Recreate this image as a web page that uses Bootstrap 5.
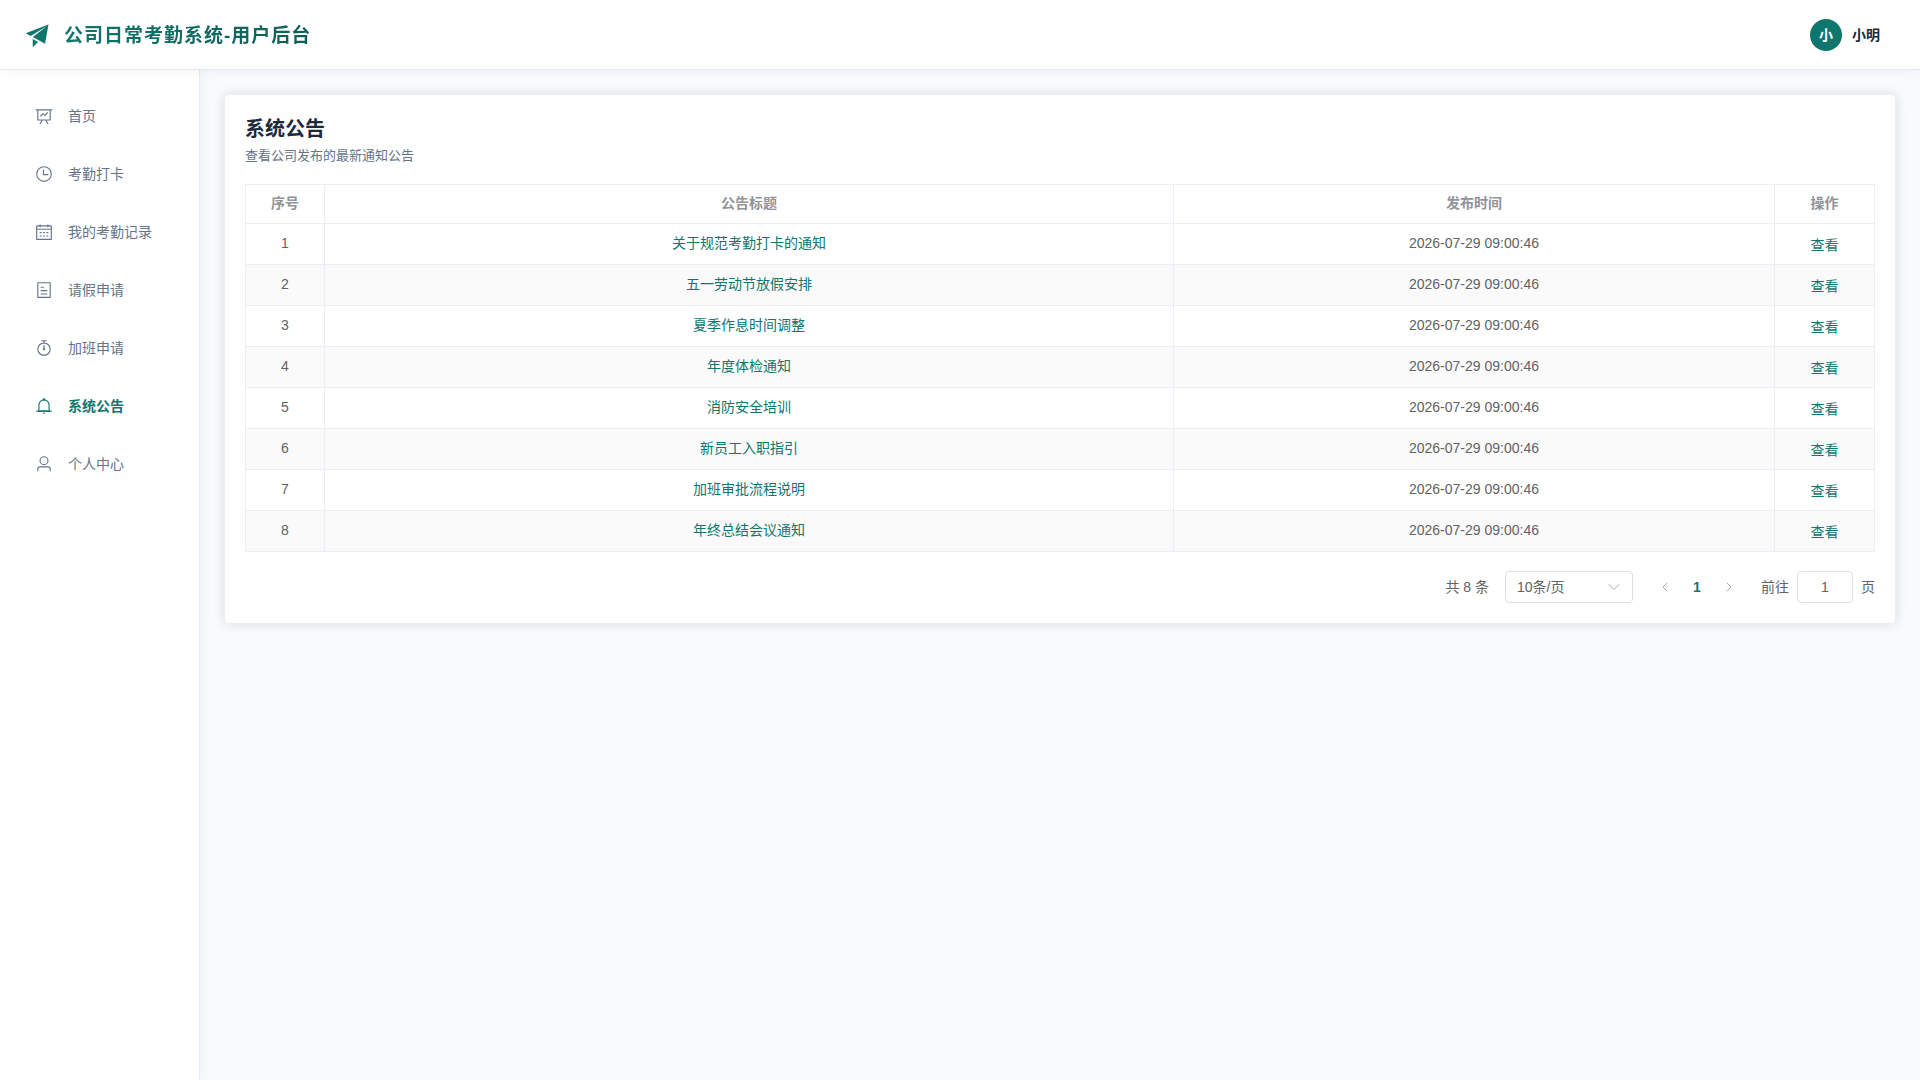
<!DOCTYPE html>
<html lang="zh-CN">
<head>
<meta charset="utf-8">
<meta name="viewport" content="width=device-width, initial-scale=1">
<title>公司日常考勤系统-用户后台</title>
<link href="https://cdn.jsdelivr.net/npm/bootstrap@5.3.0/dist/css/bootstrap.min.css" rel="stylesheet">
<style>
:root { --brand: #0f766e; --brand-dark: #115e59; --slate: #64748b; --ink: #1e293b; --line: #e2e8f0; --grid: #ebeef5; --text: #606266; }
body { font-family: "Liberation Sans", "Noto Sans CJK SC", sans-serif; font-size: 14px; line-height: 24px; color: var(--text); background: #f8fafc; }
a { text-decoration: none; }
.glyph { fill: currentColor; flex: none; width: 18px; height: 18px; }
.topbar { height: 70px; padding: 0 40px 0 24px; border-bottom: 1px solid var(--line); box-shadow: 0 1px 10px rgba(0, 0, 0, .05); z-index: 3; }
.brand { gap: 12px; color: var(--brand); }
.brand .glyph { width: 28px; height: 28px; }
.brand-name { font-size: 19px; line-height: 28px; padding-top: 2px; font-weight: 700; letter-spacing: 1px; background: linear-gradient(90deg, var(--brand), var(--brand-dark)); -webkit-background-clip: text; background-clip: text; color: transparent; }
.avatar { width: 32px; height: 32px; background: var(--brand); }
.account { gap: 10px; color: var(--ink); }
.sidebar { width: 200px; padding: 21px 0; border-right: 1px solid var(--line); box-shadow: 2px 0 10px rgba(0, 0, 0, .04); z-index: 2; }
.sidebar .nav { gap: 8px; }
.sidebar .nav-link { height: 50px; gap: 15px; padding: 0 0 0 35px; color: var(--slate); }
.sidebar .nav-link:hover, .sidebar .nav-link.active { color: var(--brand); }
.sidebar .nav-link.active { font-weight: 700; }
.content { padding: 24px; min-width: 0; }
.panel { --bs-card-border-color: var(--grid); --bs-card-border-radius: 4px; --bs-card-spacer-x: 20px; --bs-card-spacer-y: 20px; box-shadow: 0 0 12px rgba(0, 0, 0, .12); color: var(--text); }
.panel h1 { font-size: 20px; line-height: 28px; font-weight: 700; color: var(--ink); }
.subtitle { font-size: 13px; line-height: 18px; color: var(--slate); }
.notices { --bs-table-color: var(--text); --bs-table-bg: #fff; --bs-table-border-color: var(--grid); table-layout: fixed; margin: 19px 0; }
.notices > :not(caption) > * > * { padding: 7px 8px 9px; }
.notices > tbody > tr:nth-child(even) > td { background-color: #fafafa; }
.notices > tbody > tr > td:last-child { padding: 9px 8px 7px; }
.notices th { color: #909399; line-height: 22px; }
.notices a, .view-btn { color: var(--brand); }
.col-no { width: 79px; }
.col-time { width: 36.9%; }
.col-act { width: 100px; }
.view-btn { display: block; margin: 0 auto; font-size: 14px; line-height: 24px; padding: 0; border: 0; border-radius: 4px; }
.pager { gap: 16px; }
.pager .form-select, .pager .form-control { height: 32px; font-size: 14px; line-height: 22px; color: var(--text); border-color: #dcdfe6; border-radius: 4px; padding: 4px 11px; }
.pager .form-select { width: 128px; background-size: 14px; background-position: right 11px center; --bs-form-select-bg-img: url("data:image/svg+xml,%3csvg xmlns='http://www.w3.org/2000/svg' viewBox='0 0 14 14'%3e%3cpath d='M2 4.5l5 5 5-5' fill='none' stroke='%23a8abb2' stroke-linecap='round'/%3e%3c/svg%3e"); }
.pager .form-control { width: 56px; text-align: center; }
.page-nav button { width: 32px; height: 32px; padding: 0; border: 0; font-size: 14px; color: #a8abb2; opacity: 1; }
.page-nav button:disabled { color: #a8abb2; opacity: 1; border: 0; }
.page-nav .current { color: var(--brand); font-weight: 700; }
.page-nav svg { display: block; margin: auto; fill: none; stroke: currentColor; stroke-linecap: round; }
</style>
<script src="https://cdn.jsdelivr.net/npm/bootstrap@5.3.0/dist/js/bootstrap.bundle.min.js"></script>
</head>
<body class="d-flex flex-column min-vh-100">
<header class="topbar d-flex align-items-center justify-content-between bg-white position-relative">
  <a class="brand d-flex align-items-center" href="#">
    <svg class="glyph" viewBox="0 0 1024 1024" aria-hidden="true"><path d="m64 448 832-320-128 704-446.08-243.328L832 192 242.816 545.536 64 448zm256 512V657.024L512 768 320 960z"/></svg>
    <span class="brand-name">公司日常考勤系统-用户后台</span>
  </a>
  <div class="account d-flex align-items-center fw-bold">
    <span class="avatar rounded-circle text-white d-flex align-items-center justify-content-center">小</span>
    <span>小明</span>
  </div>
</header>
<div class="d-flex flex-grow-1">
  <aside class="sidebar bg-white flex-shrink-0 position-relative">
    <nav class="nav flex-column">
      <a class="nav-link d-flex align-items-center" href="#"><svg class="glyph" viewBox="0 0 1024 1024" aria-hidden="true"><path d="M359.168 768H160a32 32 0 0 1-32-32V192H64a32 32 0 0 1 0-64h896a32 32 0 1 1 0 64h-64v544a32 32 0 0 1-32 32H665.216l110.848 192h-73.856L591.36 768H433.024L322.176 960H248.32zM832 192H192v512h640zM342.656 534.656a32 32 0 1 1-45.312-45.312L444.992 341.76l125.44 94.08L679.04 300.032a32 32 0 1 1 49.92 39.936L581.632 524.224 451.008 426.24 342.656 534.592z"/></svg>首页</a>
      <a class="nav-link d-flex align-items-center" href="#"><svg class="glyph" viewBox="0 0 1024 1024" aria-hidden="true"><path d="M512 896a384 384 0 1 0 0-768 384 384 0 0 0 0 768zm0 64a448 448 0 1 1 0-896 448 448 0 0 1 0 896z"/><path d="M480 256a32 32 0 0 1 32 32v256a32 32 0 0 1-64 0V288a32 32 0 0 1 32-32z"/><path d="M480 512h256q32 0 32 32t-32 32H480q-32 0-32-32t32-32z"/></svg>考勤打卡</a>
      <a class="nav-link d-flex align-items-center" href="#"><svg class="glyph" viewBox="0 0 1024 1024" aria-hidden="true"><path d="M128 384v512h768V192H768v32a32 32 0 1 1-64 0v-32H320v32a32 32 0 0 1-64 0v-32H128v128h768v64zm192-256h384V96a32 32 0 1 1 64 0v32h160a32 32 0 0 1 32 32v768a32 32 0 0 1-32 32H96a32 32 0 0 1-32-32V160a32 32 0 0 1 32-32h160V96a32 32 0 0 1 64 0zm-32 384h64a32 32 0 0 1 0 64h-64a32 32 0 0 1 0-64zm0 192h64a32 32 0 1 1 0 64h-64a32 32 0 1 1 0-64zm192-192h64a32 32 0 0 1 0 64h-64a32 32 0 0 1 0-64zm0 192h64a32 32 0 1 1 0 64h-64a32 32 0 1 1 0-64zm192-192h64a32 32 0 1 1 0 64h-64a32 32 0 1 1 0-64zm0 192h64a32 32 0 1 1 0 64h-64a32 32 0 1 1 0-64z"/></svg>我的考勤记录</a>
      <a class="nav-link d-flex align-items-center" href="#"><svg class="glyph" viewBox="0 0 1024 1024" aria-hidden="true"><path d="M192 128v768h640V128H192zm-32-64h704a32 32 0 0 1 32 32v832a32 32 0 0 1-32 32H160a32 32 0 0 1-32-32V96a32 32 0 0 1 32-32zm160 448h384v64H320v-64zm0-192h192v64H320v-64zm0 384h384v64H320v-64z"/></svg>请假申请</a>
      <a class="nav-link d-flex align-items-center" href="#"><svg class="glyph" viewBox="0 0 1024 1024" aria-hidden="true"><path d="M512 896a320 320 0 1 0 0-640 320 320 0 0 0 0 640zm0 64a384 384 0 1 1 0-768 384 384 0 0 1 0 768z"/><path d="M512 320a32 32 0 0 1 32 32l-.512 224a32 32 0 1 1-64 0L480 352a32 32 0 0 1 32-32z"/><path d="M448 576a64 64 0 1 0 128 0 64 64 0 1 0-128 0zm96-448v128h-64V128h-96a32 32 0 0 1 0-64h256a32 32 0 1 1 0 64h-96z"/></svg>加班申请</a>
      <a class="nav-link active d-flex align-items-center" href="#" aria-current="page"><svg class="glyph" viewBox="0 0 1024 1024" aria-hidden="true"><path d="M512 64a64 64 0 0 1 64 64v64H448v-64a64 64 0 0 1 64-64z"/><path d="M256 768h512V448a256 256 0 1 0-512 0v320zm256-640a320 320 0 0 1 320 320v384H192V448a320 320 0 0 1 320-320z"/><path d="M96 768h832q32 0 32 32t-32 32H96q-32 0-32-32t32-32zm352 128h128a64 64 0 0 1-128 0z"/></svg>系统公告</a>
      <a class="nav-link d-flex align-items-center" href="#"><svg class="glyph" viewBox="0 0 1024 1024" aria-hidden="true"><path d="M512 512a192 192 0 1 0 0-384 192 192 0 0 0 0 384zm0 64a256 256 0 1 1 0-512 256 256 0 0 1 0 512zm320 320v-96a96 96 0 0 0-96-96H288a96 96 0 0 0-96 96v96a32 32 0 1 1-64 0v-96a160 160 0 0 1 160-160h448a160 160 0 0 1 160 160v96a32 32 0 1 1-64 0z"/></svg>个人中心</a>
    </nav>
  </aside>
  <main class="content flex-grow-1">
    <section class="card panel">
      <div class="card-body">
        <h1 class="mb-1">系统公告</h1>
        <p class="subtitle mb-0">查看公司发布的最新通知公告</p>
        <table class="table table-bordered text-center align-middle notices">
          <colgroup><col class="col-no"><col><col class="col-time"><col class="col-act"></colgroup>
          <thead><tr><th scope="col">序号</th><th scope="col">公告标题</th><th scope="col">发布时间</th><th scope="col">操作</th></tr></thead>
          <tbody>
            <tr><td>1</td><td><a href="#">关于规范考勤打卡的通知</a></td><td>2026-07-29 09:00:46</td><td><button type="button" class="btn view-btn">查看</button></td></tr>
            <tr><td>2</td><td><a href="#">五一劳动节放假安排</a></td><td>2026-07-29 09:00:46</td><td><button type="button" class="btn view-btn">查看</button></td></tr>
            <tr><td>3</td><td><a href="#">夏季作息时间调整</a></td><td>2026-07-29 09:00:46</td><td><button type="button" class="btn view-btn">查看</button></td></tr>
            <tr><td>4</td><td><a href="#">年度体检通知</a></td><td>2026-07-29 09:00:46</td><td><button type="button" class="btn view-btn">查看</button></td></tr>
            <tr><td>5</td><td><a href="#">消防安全培训</a></td><td>2026-07-29 09:00:46</td><td><button type="button" class="btn view-btn">查看</button></td></tr>
            <tr><td>6</td><td><a href="#">新员工入职指引</a></td><td>2026-07-29 09:00:46</td><td><button type="button" class="btn view-btn">查看</button></td></tr>
            <tr><td>7</td><td><a href="#">加班审批流程说明</a></td><td>2026-07-29 09:00:46</td><td><button type="button" class="btn view-btn">查看</button></td></tr>
            <tr><td>8</td><td><a href="#">年终总结会议通知</a></td><td>2026-07-29 09:00:46</td><td><button type="button" class="btn view-btn">查看</button></td></tr>
          </tbody>
        </table>
        <div class="pager d-flex align-items-center justify-content-end">
          <span>共 8 条</span>
          <select class="form-select" aria-label="每页条数"><option selected>10条/页</option><option>20条/页</option><option>50条/页</option></select>
          <div class="page-nav d-flex">
            <button type="button" class="btn" disabled aria-label="上一页"><svg width="14" height="14" viewBox="0 0 14 14"><path d="M9 3 5 7l4 4"/></svg></button>
            <button type="button" class="btn current" aria-current="page">1</button>
            <button type="button" class="btn" disabled aria-label="下一页"><svg width="14" height="14" viewBox="0 0 14 14"><path d="m5 3 4 4-4 4"/></svg></button>
          </div>
          <div class="d-flex align-items-center gap-2">
            <label for="jump">前往</label>
            <input id="jump" class="form-control" type="text" inputmode="numeric" value="1">
            <span>页</span>
          </div>
        </div>
      </div>
    </section>
  </main>
</div>
</body>
</html>
